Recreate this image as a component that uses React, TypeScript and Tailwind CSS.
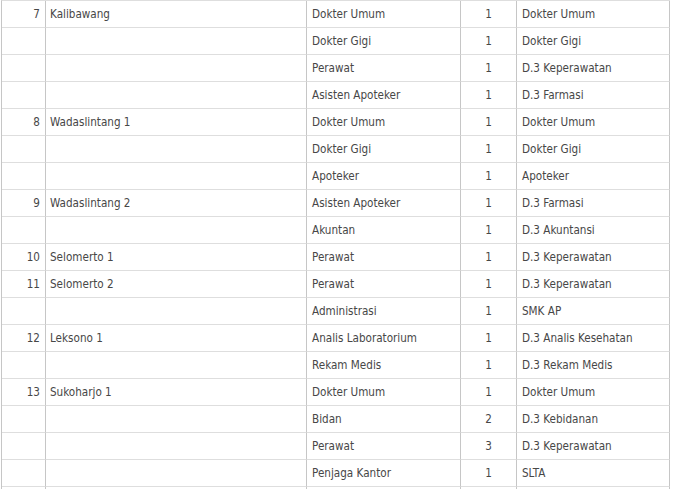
type Row = { no?: string; unit?: string; jabatan: string; jumlah: string; pendidikan: string };

const rows: Row[] = [
  { no: "7", unit: "Kalibawang", jabatan: "Dokter Umum", jumlah: "1", pendidikan: "Dokter Umum" },
  { jabatan: "Dokter Gigi", jumlah: "1", pendidikan: "Dokter Gigi" },
  { jabatan: "Perawat", jumlah: "1", pendidikan: "D.3 Keperawatan" },
  { jabatan: "Asisten Apoteker", jumlah: "1", pendidikan: "D.3 Farmasi" },
  { no: "8", unit: "Wadaslintang 1", jabatan: "Dokter Umum", jumlah: "1", pendidikan: "Dokter Umum" },
  { jabatan: "Dokter Gigi", jumlah: "1", pendidikan: "Dokter Gigi" },
  { jabatan: "Apoteker", jumlah: "1", pendidikan: "Apoteker" },
  { no: "9", unit: "Wadaslintang 2", jabatan: "Asisten Apoteker", jumlah: "1", pendidikan: "D.3 Farmasi" },
  { jabatan: "Akuntan", jumlah: "1", pendidikan: "D.3 Akuntansi" },
  { no: "10", unit: "Selomerto 1", jabatan: "Perawat", jumlah: "1", pendidikan: "D.3 Keperawatan" },
  { no: "11", unit: "Selomerto 2", jabatan: "Perawat", jumlah: "1", pendidikan: "D.3 Keperawatan" },
  { jabatan: "Administrasi", jumlah: "1", pendidikan: "SMK AP" },
  { no: "12", unit: "Leksono 1", jabatan: "Analis Laboratorium", jumlah: "1", pendidikan: "D.3 Analis Kesehatan" },
  { jabatan: "Rekam Medis", jumlah: "1", pendidikan: "D.3 Rekam Medis" },
  { no: "13", unit: "Sukoharjo 1", jabatan: "Dokter Umum", jumlah: "1", pendidikan: "Dokter Umum" },
  { jabatan: "Bidan", jumlah: "2", pendidikan: "D.3 Kebidanan" },
  { jabatan: "Perawat", jumlah: "3", pendidikan: "D.3 Keperawatan" },
  { jabatan: "Penjaga Kantor", jumlah: "1", pendidikan: "SLTA" },
  { jabatan: "", jumlah: "", pendidikan: "" },
];

const cell =
  "h-[27px] pt-[2px] flex items-center border-r border-b border-r-[#c6c6c6] border-b-[#dedede] whitespace-nowrap overflow-hidden";

export default function App() {
  return (
    <div className="min-h-screen bg-white">
      <div
        className="ml-px w-[669px] grid grid-cols-[44px_261px_154px_56px_153px] border-l border-t border-l-[#c6c6c6] border-t-[#dedede] text-[11.6px] text-[#474747]"
        style={{ fontFamily: "'DejaVu Sans Condensed', 'DejaVu Sans', sans-serif" }}
      >
        {rows.map((r, i) => (
          <div key={i} className="contents">
            <div className={`${cell} justify-end pr-[5px]`}>{r.no}</div>
            <div className={`${cell} pl-[4px]`}>{r.unit}</div>
            <div className={`${cell} pl-[5px]`}>{r.jabatan}</div>
            <div className={`${cell} justify-center`}>{r.jumlah}</div>
            <div className={`${cell} pl-[5px]`}>{r.pendidikan}</div>
          </div>
        ))}
      </div>
    </div>
  );
}
